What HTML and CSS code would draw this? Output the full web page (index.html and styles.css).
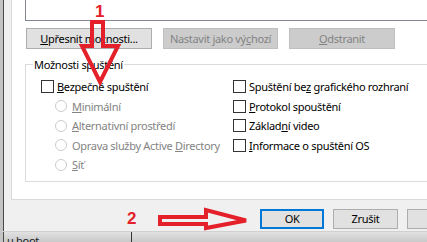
FILE: index.html
```html
<!DOCTYPE html>
<html lang="cs">
<head>
  <meta charset="UTF-8">
  <title>Konfigurace systému</title>
  <link rel="stylesheet" href="styles.css">
</head>
<body>
  <div class="screen">
    <div class="main">
      <div class="edge"></div>
      <div class="dialog">
        <div class="tabpage">
          <div class="listbox"></div>
          <div class="btnrow">
            <button class="btn btn-more"><u>U</u>přesnit možnosti...</button>
            <button class="btn btn-default" disabled>Nastavit jako vý<u>c</u>hozí</button>
            <button class="btn btn-remove" disabled><u>O</u>dstranit</button>
          </div>
          <div class="options">
            <div class="group">
              <span class="legend">Možnosti spuštění</span>
              <div class="cols">
                <div class="col">
                  <div class="row"><span class="box"></span><span class="label"><u>B</u>ezpečné spuštění</span></div>
                  <div class="row sub"><span class="radio"></span><span class="label off"><u>M</u>inimální</span></div>
                  <div class="row sub"><span class="radio"></span><span class="label off"><u>A</u>lternativní prostředí</span></div>
                  <div class="row sub"><span class="radio"></span><span class="label off">Oprava služby Active <u>D</u>irectory</span></div>
                  <div class="row sub"><span class="radio"></span><span class="label off"><u>S</u>íť</span></div>
                </div>
                <div class="col">
                  <div class="row"><span class="box"></span><span class="label">Spuštění be<u>z</u> grafického rozhraní</span></div>
                  <div class="row"><span class="box"></span><span class="label"><u>P</u>rotokol spouštění</span></div>
                  <div class="row"><span class="box"></span><span class="label">Základ<u>n</u>í video</span></div>
                  <div class="row"><span class="box"></span><span class="label"><u>I</u>nformace o spuštění OS</span></div>
                </div>
              </div>
            </div>
            <div class="side">
              <div class="side-label">Č</div>
              <div class="side-field"></div>
              <span class="box side-box"></span>
            </div>
          </div>
        </div>
        <div class="footer">
          <button class="btn btn-ok">OK</button>
          <button class="btn btn-cancel">Zrušit</button>
          <button class="btn btn-cancel"></button>
        </div>
      </div>
    </div>
    <div class="taskbar"><span class="task">u boot</span><span class="task-sep"></span></div>

    <span class="mark mark-1">1</span>
    <span class="mark mark-2">2</span>
    <svg class="arrows" width="427" height="242" viewBox="0 0 427 242">
      <polygon points="92,22 103,22 103,46 118,46 100,82 82,46 92,46" fill="none" stroke="#e4202a" stroke-width="4" stroke-linejoin="miter"/>
      <polygon points="160,217 206,217 206,210 246,220.5 206,228 206,224 160,224" fill="none" stroke="#e4202a" stroke-width="4" stroke-linejoin="miter"/>
    </svg>
  </div>
</body>
</html>
```

FILE: styles.css
```css
body {
  margin: 0;
  padding: 0;
  background: #f0f0f0;
  font-family: 'Noto Sans', 'Open Sans', sans-serif;
  font-size: 11px;
  letter-spacing: -0.3px;
  color: #000;
}
.screen {
  position: relative;
  width: 427px;
  height: 242px;
  overflow: hidden;
}
.main {
  display: flex;
  height: 231px;
}
.edge {
  width: 3px;
  flex: none;
  background: #c4c4c4;
  border-right: 1px solid #4a4a4a;
}
.dialog {
  flex: none;
  width: 460px;
  background: #f0f0f0;
  padding-left: 7px;
  display: flex;
  flex-direction: column;
}
.tabpage {
  height: 199px;
  background: #fff;
  border-left: 1px solid #d9d9d9;
  border-bottom: 1px solid #d9d9d9;
  padding-left: 13px;
  display: flex;
  flex-direction: column;
}
.listbox {
  margin-top: -10px;
  height: 29px;
  border: 1px solid #828790;
  border-right: none;
  background: #fff;
}
.btnrow {
  display: flex;
  gap: 11px;
  margin-top: 7px;
  padding-left: 1px;
}
.btn {
  font: inherit;
  letter-spacing: inherit;
  height: 21px;
  padding: 0;
  background: #e1e1e1;
  border: 1px solid #adadad;
  color: #000;
  text-align: center;
  line-height: 18px;
  white-space: nowrap;
}
.btn:disabled {
  background: #cccccc;
  border-color: #bfbfbf;
  color: #838383;
}
.btn-more { width: 126px; }
.btn-default { width: 115px; }
.btn-remove { width: 106px; }
.options {
  display: flex;
  align-items: flex-start;
}
.group {
  width: 389px;
  height: 116px;
  margin-top: 15px;
  border: 1px solid #dcdcdc;
  padding-left: 15px;
  box-sizing: content-box;
}
.legend {
  display: table;
  margin-top: -8px;
  margin-left: -8px;
  padding: 0 1px;
  background: #fff;
  line-height: 16px;
}
.cols {
  display: grid;
  grid-template-columns: 192px 1fr;
  margin-top: 4px;
}
.row {
  display: flex;
  align-items: center;
  height: 19.5px;
  white-space: nowrap;
}
.row.sub {
  padding-left: 14px;
}
.box {
  width: 11px;
  height: 11px;
  flex: none;
  border: 1px solid #333;
  background: #fff;
}
.radio {
  width: 10px;
  height: 10px;
  flex: none;
  border: 1px solid #cccccc;
  border-radius: 50%;
  background: #fff;
}
.label {
  margin-left: 3px;
}
.sub .label {
  margin-left: 5px;
}
.label.off {
  color: #838383;
}
.side {
  margin-left: 8px;
  display: flex;
  flex-direction: column;
  align-items: flex-start;
}
.side-label {
  line-height: 14px;
  margin-top: 1px;
}
.side-field {
  width: 30px;
  height: 14px;
  border: 1px solid #7a7a7a;
  margin-top: 1px;
}
.side-box {
  margin-top: 56px;
}
.footer {
  display: flex;
  gap: 9px;
  padding-top: 9px;
  padding-left: 249px;
}
.btn-ok {
  width: 72px;
  height: 20px;
  border-color: #0078d7;
  box-shadow: inset 0 0 0 1px #0078d7;
}
.btn-cancel {
  width: 72px;
  height: 20px;
}
.taskbar {
  height: 11px;
  display: flex;
  background: linear-gradient(#e2e2e2, #c6c6c6);
  border-top: 1px solid #d0d0d0;
  border-left: 3px solid #c4c4c4;
  box-shadow: inset 1px 0 0 #4a4a4a;
}
.task {
  width: 124px;
  padding-left: 4px;
  line-height: 18px;
  font-size: 11px;
  color: #222;
}
.task-sep {
  width: 1px;
  background: #333;
}
.mark {
  position: absolute;
  font-family: 'Liberation Sans', sans-serif;
  font-weight: bold;
  font-size: 17px;
  line-height: 17px;
  letter-spacing: 0;
  color: #e4202a;
}
.mark-1 {
  left: 95px;
  top: 3px;
}
.mark-2 {
  left: 127px;
  top: 210px;
}
.arrows {
  position: absolute;
  left: 0;
  top: 0;
  pointer-events: none;
}
```
